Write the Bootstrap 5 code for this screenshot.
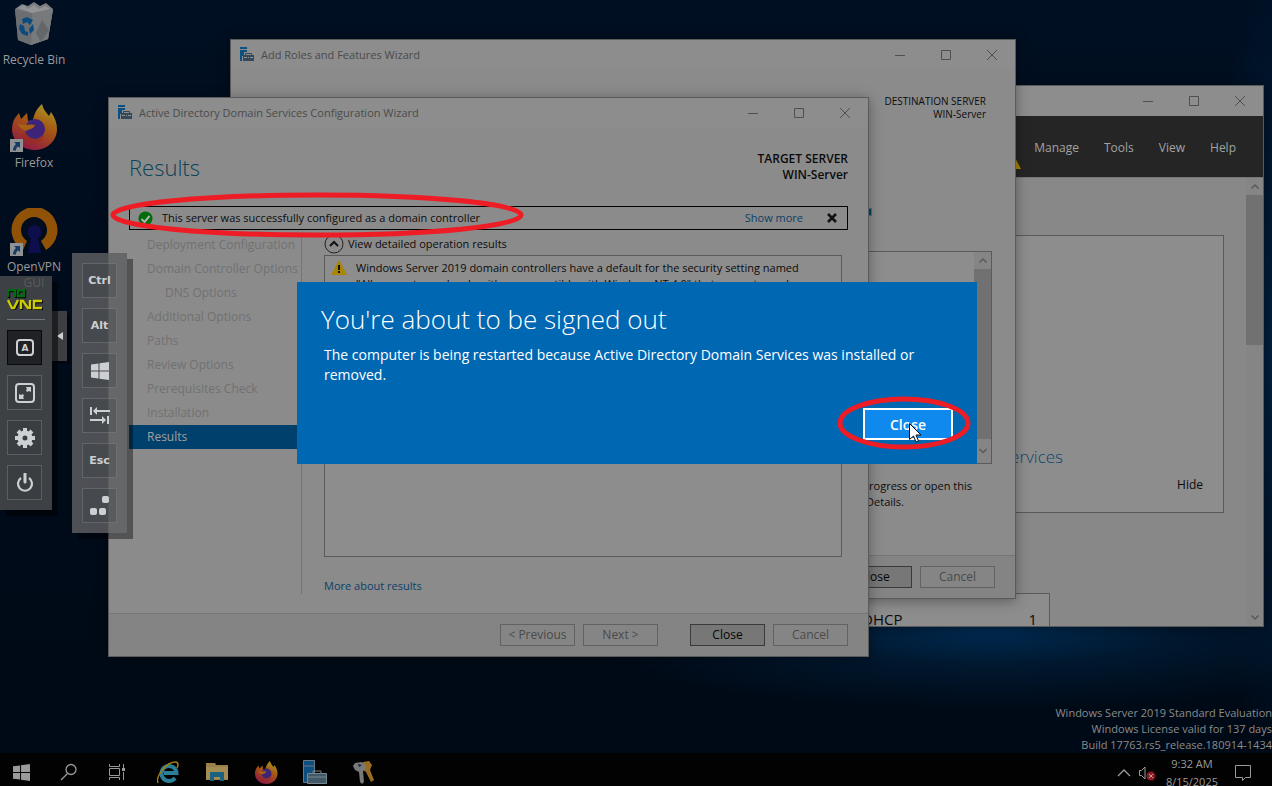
<!DOCTYPE html>
<html lang="en">
<head>
<meta charset="utf-8">
<meta name="viewport" content="width=device-width, initial-scale=1">
<title>WIN-Server – noVNC</title>
<link href="https://cdn.jsdelivr.net/npm/bootstrap@5.3.0/dist/css/bootstrap.min.css" rel="stylesheet">
<style>
body{font-family:"Open Sans","Noto Sans",sans-serif;font-size:12px;line-height:16px;color:#0b0b0b;background:#000c1c}
.desktop{height:100vh;background:radial-gradient(ellipse 420px 80px at 78% 80%,#002c54 0,#00182f 45%,transparent 100%),radial-gradient(ellipse 60px 400px at 100% 45%,#00203e,transparent),linear-gradient(180deg,#000f22,#000b1a 50%,#000a16)}
.task{height:33px;background:#020203;z-index:1}
.task button{height:38px}
.plain{background:none;border:0;padding:0;color:inherit}
.shortcut{position:absolute;left:0;width:68px;color:#9a9a9a;text-align:center;text-decoration:none}
.shortcut span{padding-top:2px}
.win{position:absolute;background:#8b8b8b;border:1px solid #5a5a5a;box-shadow:0 2px 12px rgba(0,0,0,.35);font-size:11px}
.sm{left:700px;top:85px;width:564px;height:542px}
.roles{left:230px;top:39px;width:786px;height:560px}
.adds{left:108px;top:97px;width:761px;height:560px}
.tbar{height:29px;flex-shrink:0;background:#8d8d8d;color:#4b4b4b;padding-left:9px}
.sm .tbar{height:30px}
.tbar .ctl{width:46px;height:27px;color:#4f4f4f;align-self:flex-start}
.menubar{height:62px;background:#252525;color:#a2a2a2;gap:25px;padding:2px 27px 0 0;border-bottom:1px solid #777;font-size:12px}
.menubar a{color:inherit;text-decoration:none}
.edge{border:1px solid #5a5a5a}
.scroll{width:17px;background:#858585;color:#5a5a5a}
.thumb{background:#717171}
.foot{height:43px;background:#848484;border-top:1px solid #757575;padding-right:20px}
.wbtn{width:75px;height:22px;padding:0;font-size:12px;line-height:20px;border:1px solid #626262;border-radius:0;background:#858585;color:#4a4a4a}
.wbtn.main{background:#777;border-color:#3a3a3a;color:#050505}
.h-res{font-size:22px;line-height:32px;font-weight:300;color:#0b4257;margin:0}
.note{height:24px;border:1px solid #000}
.lnk{color:#0b3f66;text-decoration:none}
.side{width:173px;border-right:1px solid #757575;font-size:12px}
.side a{height:24px;line-height:24px;padding-left:18px;color:#717171;text-decoration:none;white-space:nowrap}
.side a.sub{padding-left:36px}
.side a.active{background:#00406c;color:#a0a0a0}
.signout{position:absolute;left:297px;top:282px;width:680px;height:182px;background:#0067b3;color:#fff;padding:19px 24px 24px}
.signout h1{font-size:26px;line-height:36px;font-weight:300;margin:0 0 8px}
.signout p{font-size:14px;line-height:20px;padding-left:3px;margin:0}
.okbtn{width:90px;height:32px;background:#1089ef;border:2px solid #fff;color:#fff;font-size:14px;font-weight:600;padding:0;border-radius:0}
.vnc{position:absolute;left:0;top:276px;width:52px;height:234px;padding:10px 7px 0;gap:10px;background:rgba(75,77,78,.82);box-shadow:6px 6px 0 rgba(0,0,0,.5)}
.vnckeys{position:absolute;left:72px;top:253px;width:55px;height:280px;gap:10px;background:rgba(94,95,97,.82);box-shadow:6px 6px 0 rgba(0,0,0,.4)}
.vb{width:35px;height:35px;flex:none;padding:0;border:1px solid rgba(150,155,160,.35);background:rgba(50,54,60,.25);color:#cdd0d2;font:bold 11px/16px "DejaVu Sans",sans-serif;display:flex;align-items:center;justify-content:center}
.vb.on{background:#202124;border-color:#08090a}
.grip{position:absolute;left:52px;top:311px;width:15px;height:50px;background:rgba(70,72,73,.85);box-shadow:3px 3px 0 rgba(0,0,0,.4)}
.logo{height:34px;padding-top:3px}
.over{position:absolute;pointer-events:none;fill:none}
.license{color:#8b8b8b;text-align:right;line-height:16px;font-size:11px}
.tray{color:#9a9a9a;font-size:11px}
</style>
</head>
<body>
<svg width="0" height="0" class="position-absolute" aria-hidden="true">
<defs>
<symbol id="i-srv" viewBox="0 0 15 15"><path d="M0 0h7v2H0zM0 3h7v2H4v4H2v5H0z" fill="#0d4f80"/><path d="M3 8h11v6H3z" fill="#34485a"/><path d="M5.500 8V6.500h6V8" stroke="#34485a" fill="none"/><path d="M4 10.500h3M8 10.500h1M10 10.500h3" stroke="#8d9498" fill="none"/></symbol>
<symbol id="i-min" viewBox="0 0 12 12"><path d="M1 6.500h10" stroke="currentColor"/></symbol>
<symbol id="i-max" viewBox="0 0 12 12"><path d="M1.500 1.500h9v9h-9z" stroke="currentColor" fill="none"/></symbol>
<symbol id="i-x" viewBox="0 0 12 12"><path d="M1 1l10 10M11 1L1 11" stroke="currentColor"/></symbol>
<symbol id="i-up" viewBox="0 0 10 10"><path d="M1.500 7L5 3.500 8.500 7" stroke="currentColor" stroke-width="1.500" fill="none"/></symbol>
<symbol id="i-dn" viewBox="0 0 10 10"><path d="M1.500 3L5 6.500 8.500 3" stroke="currentColor" stroke-width="1.500" fill="none"/></symbol>
<symbol id="i-win" viewBox="0 0 18 18"><path d="M0 2.500L7.500 1.500V8.500H0zM8.500 1.300L18 0v8.500H8.500zM0 9.500h7.500v7L0 15.500zM8.500 9.500H18V18l-9.500-1.300z" fill="currentColor"/></symbol>
<linearGradient id="g-fx" x1=".8" y1="0" x2=".3" y2="1"><stop offset="0" stop-color="#a89a28"/><stop offset=".45" stop-color="#a55512"/><stop offset="1" stop-color="#8f1747"/></linearGradient>
<symbol id="i-fx" viewBox="0 0 46 46"><path d="M3 14L7 9l2 6 6-6 1 8 5-1c1-5 3-11 9-16 1 5 4 8 7 12l2-4c4 6 6 11 6 17C45 37 35 46 23 46 10 46 0 37 0 25c0-4 1-8 3-11z" fill="url(#g-fx)"/><circle cx="23" cy="25" r="10" fill="#3d2478"/><path d="M6 19c6 4 11 0 17 2-1 4-6 4-9 6-4-2-8-4-8-8z" fill="#a86014"/><path d="M14 27c0 9 13 11 18 4-2 12-20 10-23 1z" fill="#96281f" opacity=".5"/></symbol>
<symbol id="i-arrow" viewBox="0 0 13 13"><path d="M0 0h13v13H0z" fill="#8f9294"/><path d="M4 3h6v6L8 7.500C6.500 8.500 6 9.500 6 11.500H3C3 8.500 4 7 6 5z" fill="#173a66"/></symbol>
<symbol id="i-warn" viewBox="0 0 16 15"><path d="M8 0l8 15H0z" fill="#a98500"/><path d="M7 5h2v5H7zM7 11h2v2H7z" fill="#111"/></symbol>
</defs></svg>

<div class="desktop position-relative overflow-hidden d-flex flex-column">
  <a href="#" class="shortcut" style="top:2px">
    <svg width="40" height="44" viewBox="0 0 40 44" class="d-block mx-auto"><path d="M1 7l7-5 6 2 6-4 6 4 6-3 7 6-5 30-17 6-13-5z" fill="#7c7e80"/><path d="M1 7l17 4 21-4-5 30-17 6-13-5z" fill="#6b6e70"/><path d="M18 11l21-4-5 30-17 6z" fill="#777a7c"/><path d="M4 6l6-3 4 4 6-4 5 4 6-3 5 3-18 4z" fill="#929496"/><path d="M28 18l7 10-8 12-5-9z" fill="#64676a"/><g fill="#0b4b80"><path d="M8 17l5-2 6 3-3 5-3-3-4 2z"/><path d="M19 22l1 6-4 4-1-5z"/><path d="M6 22l4 2 1 5 3 1v4l-6-2-3-5z"/></g></svg>
    <span class="d-block mt-1">Recycle Bin</span></a>
  <a href="#" class="shortcut" style="top:104px">
    <svg width="48" height="49" viewBox="0 0 48 49" class="d-block mx-auto"><use href="#i-fx" x="2" y="0" width="46" height="46"/><use href="#i-arrow" x="0" y="35" width="13" height="13"/></svg>
    <span class="d-block">Firefox</span></a>
  <a href="#" class="shortcut" style="top:208px">
    <svg width="48" height="49" viewBox="0 0 48 49" class="d-block mx-auto"><path d="M13 42A23 23 0 1 1 36 42L31 33A13 13 0 1 0 17 33z" fill="#8f5206"/><path d="M24 17a7 7 0 0 1 4 13l3 15H18l3-15a7 7 0 0 1 3-13z" fill="#0e0e4c"/><use href="#i-arrow" x="0" y="35" width="13" height="13"/></svg>
    <span class="d-block">OpenVPN GUI</span></a>

  <section class="win sm d-flex flex-column" aria-label="Server Manager">
    <div class="tbar d-flex justify-content-end">
      <button class="ctl plain" aria-label="Minimize"><svg width="12" height="12"><use href="#i-min"/></svg></button>
      <button class="ctl plain" aria-label="Maximize"><svg width="12" height="12"><use href="#i-max"/></svg></button>
      <button class="ctl plain" aria-label="Close window"><svg width="12" height="12"><use href="#i-x"/></svg></button>
    </div>
    <nav class="menubar d-flex align-items-center justify-content-end flex-shrink-0">
      <svg width="18" height="17" class="align-self-end mb-2" style="margin-right:-12px"><use href="#i-warn" width="18" height="17"/></svg>
      <a href="#">Manage</a><a href="#">Tools</a><a href="#">View</a><a href="#">Help</a>
    </nav>
    <div class="d-flex flex-grow-1 overflow-hidden">
      <div class="flex-grow-1 overflow-hidden" style="background:#888">
        <div class="edge d-flex flex-column justify-content-end" style="height:278px;margin:57px 22px 0 0;background:#8d8d8d;padding:0 20px 19px 0">
          <div class="text-end" style="font-size:17px;line-height:24px;font-weight:300;color:#0d4570;padding-right:140px">Services</div>
          <div class="text-end mt-2" style="font-size:12px"><button class="plain">Hide</button></div>
        </div>
        <div class="edge d-flex justify-content-between" style="width:349px;height:60px;margin-top:80px;background:#8d8d8d;font-size:15px;line-height:24px;padding:13px 12px 0 160px"><span>DHCP</span><span>1</span></div>
      </div>
      <div class="scroll d-flex flex-column align-items-center">
        <svg width="10" height="17"><use href="#i-up" width="10" height="17"/></svg>
        <div class="thumb w-100" style="height:150px"></div>
        <svg width="10" height="17" class="mt-auto"><use href="#i-dn" width="10" height="17"/></svg>
      </div>
    </div>
  </section>

  <section class="win roles d-flex flex-column" aria-label="Add Roles and Features Wizard">
    <div class="tbar d-flex align-items-center">
      <svg width="15" height="15"><use href="#i-srv"/></svg>
      <span class="flex-grow-1" style="padding-left:6px">Add Roles and Features Wizard</span>
      <button class="ctl plain" aria-label="Minimize"><svg width="12" height="12"><use href="#i-min"/></svg></button>
      <button class="ctl plain" aria-label="Maximize"><svg width="12" height="12"><use href="#i-max"/></svg></button>
      <button class="ctl plain" aria-label="Close window"><svg width="12" height="12"><use href="#i-x"/></svg></button>
    </div>
    <div class="text-end" style="font-size:10px;line-height:13px;padding:26px 29px 0 0">DESTINATION SERVER<br>WIN-Server</div>
    <div style="width:8px;height:8px;margin:87px 0 0 633px;background:#00485c;border:1px solid #667"></div>
    <div class="edge d-flex justify-content-end" style="height:213px;margin:35px 23px 0 22px;background:#8d8d8d">
      <div class="scroll d-flex flex-column align-items-center">
        <svg width="10" height="17"><use href="#i-up" width="10" height="17"/></svg>
        <div class="thumb w-100 flex-grow-1"></div>
        <svg width="10" height="24"><use href="#i-dn" width="10" height="24"/></svg>
      </div>
    </div>
    <div class="text-end" style="padding:14px 43px 0 0">progress or open this</div>
    <div class="text-end" style="padding-right:111px">Details.</div>
    <div class="foot mt-auto d-flex justify-content-end align-items-center gap-2">
      <button class="wbtn btn main">Close</button><button class="wbtn btn">Cancel</button>
    </div>
  </section>

  <section class="win adds d-flex flex-column" aria-label="Active Directory Domain Services Configuration Wizard">
    <div class="tbar d-flex align-items-center">
      <svg width="15" height="15"><use href="#i-srv"/></svg>
      <span class="flex-grow-1" style="padding-left:6px">Active Directory Domain Services Configuration Wizard</span>
      <button class="ctl plain" aria-label="Minimize"><svg width="12" height="12"><use href="#i-min"/></svg></button>
      <button class="ctl plain" aria-label="Maximize"><svg width="12" height="12"><use href="#i-max"/></svg></button>
      <button class="ctl plain" aria-label="Close window"><svg width="12" height="12"><use href="#i-x"/></svg></button>
    </div>
    <div class="d-flex justify-content-between align-items-start" style="padding:24px 20px 0;height:79px">
      <h2 class="h-res">Results</h2>
      <div class="text-end fw-semibold" style="font-size:12px">TARGET SERVER<br>WIN-Server</div>
    </div>
    <div class="note d-flex align-items-center" style="margin:0 20px;padding:0 10px 0 8px">
      <svg width="15" height="15" viewBox="0 0 15 15"><circle cx="7.500" cy="7.500" r="7" fill="#006d08"/><path d="M3.500 8l3 3 5-6" fill="none" stroke="#b0b0b0" stroke-width="2"/></svg>
      <span class="flex-grow-1" style="padding-left:9px">This server was successfully configured as a domain controller</span>
      <a href="#" class="lnk">Show more</a>
      <button class="plain" style="margin-left:24px" aria-label="Dismiss"><svg width="10" height="10" class="d-block" viewBox="0 0 10 10"><path d="M1 1l8 8M9 1L1 9" stroke="#111" stroke-width="2.500"/></svg></button>
    </div>
    <div class="d-flex" style="margin:3px 20px 0;height:361px">
      <nav class="side d-flex flex-column flex-shrink-0">
        <a href="#">Deployment Configuration</a><a href="#">Domain Controller Options</a><a href="#" class="sub">DNS Options</a><a href="#">Additional Options</a><a href="#">Paths</a><a href="#">Review Options</a><a href="#">Prerequisites Check</a><a href="#">Installation</a><a href="#" class="active">Results</a>
      </nav>
      <div class="flex-grow-1 d-flex flex-column" style="padding:1px 6px 0 22px">
        <div class="d-flex align-items-center" style="gap:4px;height:20px"><svg width="20" height="20" viewBox="0 0 20 20"><circle cx="10" cy="10" r="9" fill="none" stroke="#222"/><path d="M6 12l4-4 4 4" fill="none" stroke="#111" stroke-width="2"/></svg><span>View detailed operation results</span></div>
        <div class="edge d-flex align-items-start text-nowrap" style="height:302px;margin-top:1px;background:#8d8d8d;padding:4px 6px;gap:9px"><svg width="16" height="15" class="flex-shrink-0"><use href="#i-warn"/></svg><span>Windows Server 2019 domain controllers have a default for the security setting named<br>"Allow cryptography algorithms compatible with Windows NT 4.0" that prevents weaker</span></div>
        <a href="#" class="lnk" style="margin-top:21px">More about results</a>
      </div>
    </div>
    <div class="foot mt-auto d-flex justify-content-end align-items-center gap-2">
      <button class="wbtn btn">&lt; Previous</button><button class="wbtn btn">Next &gt;</button><button class="wbtn btn main" style="margin-left:24px">Close</button><button class="wbtn btn">Cancel</button>
    </div>
  </section>

  <section class="signout d-flex flex-column" role="dialog" aria-labelledby="so">
    <h1 id="so">You're about to be signed out</h1>
    <p>The computer is being restarted because Active Directory Domain Services was installed or<br>removed.</p>
    <button class="okbtn btn mt-auto ms-auto">Close</button>
  </section>

  <div class="vnckeys d-flex flex-column align-items-center" style="padding-top:10px">
    <button class="vb">Ctrl</button><button class="vb">Alt</button>
    <button class="vb" aria-label="Windows"><svg width="18" height="18"><use href="#i-win"/></svg></button>
    <button class="vb" aria-label="Tab"><svg width="20" height="18" viewBox="0 0 20 18" fill="currentColor"><path d="M0 0h2v8H0zM3 4l4-4v3h13v2H7v3zM17 9h2v8h-2zM16 13l-4-4v3H0v2h12v3z"/></svg></button>
    <button class="vb">Esc</button>
    <button class="vb" aria-label="Ctrl+Alt+Del"><svg width="20" height="20" viewBox="0 0 20 20" fill="currentColor"><rect x="12" width="7" height="7" rx="2"/><rect y="12" width="7" height="7" rx="2"/><rect x="9" y="12" width="7" height="7" rx="2"/></svg></button>
  </div>
  <button class="grip plain" aria-label="Hide control bar"><svg width="6" height="8" viewBox="0 0 6 8" class="d-block" style="margin-left:5px"><path d="M6 0v8L0 4z" fill="#cdd0d2"/></svg></button>
  <div class="vnc d-flex flex-column">
    <div class="logo border-bottom border-secondary"><svg width="36" height="21" viewBox="0 0 36 21" class="d-block" fill="none" stroke-width="2.400" role="img" aria-label="noVNC"><g stroke="#000" transform="translate(1 1)"><path d="M1 8V1h7v7M11 1h6v6h-6zM1 11l4 8h2l4-8M14 20v-8h2l5 7h2V11M35 12h-8v7h8"/></g><path d="M1 8V1h7v7M11 1h6v6h-6z" stroke="#006c10"/><path d="M1 11l4 8h2l4-8M14 20v-8h2l5 7h2V11M35 12h-8v7h8" stroke="#cccc00"/></svg></div>
    <button class="vb on" aria-label="Extra keys"><svg width="18" height="18" viewBox="0 0 18 18"><rect x="1" y="1" width="16" height="15" rx="3" fill="none" stroke="currentColor" stroke-width="2"/><path d="M2 15h14v2H2z" fill="currentColor"/><text x="9" y="12" font-size="9" text-anchor="middle" fill="currentColor">A</text></svg></button>
    <button class="vb" aria-label="Fullscreen"><svg width="20" height="20" viewBox="0 0 20 20"><rect x="1" y="1" width="18" height="18" rx="3" fill="none" stroke="currentColor" stroke-width="2"/><path d="M11 4h5v5l-2-1-2 1-1-2 1-1zM9 16H4v-5l2 1 2-1 1 2-1 1z" fill="currentColor"/></svg></button>
    <button class="vb" aria-label="Settings"><svg width="20" height="20" viewBox="0 0 20 20"><circle cx="10" cy="10" r="5" fill="none" stroke="currentColor" stroke-width="5"/><path d="M10 0v5M10 15v5M0 10h5M15 10h5M3 3l4 4M13 13l4 4M17 3l-4 4M7 13l-4 4" stroke="currentColor" stroke-width="4"/></svg></button>
    <button class="vb" aria-label="Disconnect"><svg width="18" height="20" viewBox="0 0 18 20" fill="none" stroke="currentColor"><path d="M5 5a7 7 0 1 0 8 0" stroke-width="2.200"/><path d="M9 1v8" stroke-width="3" stroke-linecap="round"/></svg></button>
  </div>

  <svg class="over" style="left:109px;top:190px" width="418" height="52"><ellipse cx="208" cy="25" rx="204" ry="20" stroke="#ee1c24" stroke-width="5"/></svg>
  <svg class="over" style="left:835px;top:395px" width="138" height="58"><ellipse cx="69" cy="28" rx="64" ry="24" stroke="#ee1c24" stroke-width="5"/></svg>
  <svg class="over" style="left:909px;top:423px" width="13" height="20" viewBox="0 0 13 20"><path d="M.5 .5v16l4-3.500 2.500 6 2.500-1-2.500-6h5z" fill="#fff" stroke="#111"/></svg>

  <div class="license mt-auto">Windows Server 2019 Standard Evaluation<br>Windows License valid for 137 days<br>Build 17763.rs5_release.180914-1434</div>
  <footer class="task d-flex align-items-start overflow-hidden flex-shrink-0">
    <button class="plain" style="width:42px" aria-label="Start"><svg width="17" height="17" style="color:#9a9a9a"><use href="#i-win"/></svg></button>
    <button class="plain" style="width:54px" aria-label="Search"><svg width="18" height="18" viewBox="0 0 18 18" fill="none" stroke="#9a9a9a" stroke-width="1.300"><circle cx="11" cy="6.500" r="5"/><path d="M7.500 10.500L1 17"/></svg></button>
    <button class="plain" style="width:42px" aria-label="Task view"><svg width="17" height="16" viewBox="0 0 17 16" fill="none" stroke="#9a9a9a"><path d="M.500 0v2.500h10V0M.500 16v-2.500h10V16M.500 4.500h10v7H.500zM14.500 0v4M14.500 8v8"/><path d="M13 4h3v3h-3z" fill="#9a9a9a" stroke="none"/></svg></button>
    <button class="plain" style="width:60px" aria-label="Internet Explorer"><svg width="22" height="23" viewBox="0 0 22 23" fill="none"><path d="M18 17a7.500 7.500 0 1 1 1.500-5H7" stroke="#2b7f99" stroke-width="4"/><path d="M1 22C-2 16 10 0 19 1c3 1 2 4 1 6" stroke="#a57f10" stroke-width="1.500"/></svg></button>
    <button class="plain" style="width:38px" aria-label="File Explorer"><svg width="22" height="20" viewBox="0 0 22 20"><path d="M0 1h9l1 2h12v15H0z" fill="#9a8048"/><path d="M0 5h22v12H0z" fill="#a48d54"/><path d="M4 19v-9h14v9h-4v-4H8v4z" fill="#1a6380"/></svg></button>
    <button class="plain" style="width:60px" aria-label="Firefox"><svg width="23" height="23"><use href="#i-fx"/></svg></button>
    <button class="plain" style="width:38px" aria-label="Server Manager"><svg width="24" height="24" viewBox="0 0 24 24"><path d="M.500 .500h11v22H.500zM0 6h12" fill="#0d4f80" stroke="#6a7680"/><path d="M4.500 13.500h19v10h-19z" fill="#405868" stroke="#77858f"/><path d="M10 13v-2h8v2M5 17h18" fill="none" stroke="#77858f"/></svg></button>
    <button class="plain" style="width:60px" aria-label="Keys"><svg width="22" height="24" viewBox="0 0 22 24"><path d="M10 2l6-1 3 4-2 5 4 10-3 2-5-10-3-2z" fill="#9a6c22"/><path d="M2 3l7-1 4 4-1 4-2 1 1 11-2 2-2-2-1-10-4-2-2-4z" fill="#77797b"/><path d="M5 4l4 1-3 2z" fill="#222"/></svg></button>
    <div class="tray ms-auto d-flex align-items-start">
      <svg width="14" height="9" viewBox="0 0 14 9" fill="none" stroke="currentColor" stroke-width="1.300" style="margin-top:15px"><path d="M1 8l6-6 6 6"/></svg>
      <svg width="17" height="15" viewBox="0 0 17 15" fill="none" style="margin:13px 10px 0 8px"><path d="M.500 4.500h2L6 1v12L2.500 9.500h-2z" stroke="#9a9a9a"/><circle cx="12" cy="10" r="4.500" fill="#8c1a20"/><path d="M10 8l4 4M14 8l-4 4" stroke="#b0a0a0"/></svg>
      <div class="text-center" style="line-height:18px;padding-top:2px">9:32 AM<br>8/15/2025</div>
      <svg width="17" height="17" viewBox="0 0 17 17" fill="none" stroke="currentColor" style="margin:12px 20px 0 17px"><path d="M.500 .500h15v12h-5l-3 3v-3h-7z"/></svg>
    </div>
  </footer>
</div>
<script src="https://cdn.jsdelivr.net/npm/bootstrap@5.3.0/dist/js/bootstrap.bundle.min.js"></script>
</body>
</html>
